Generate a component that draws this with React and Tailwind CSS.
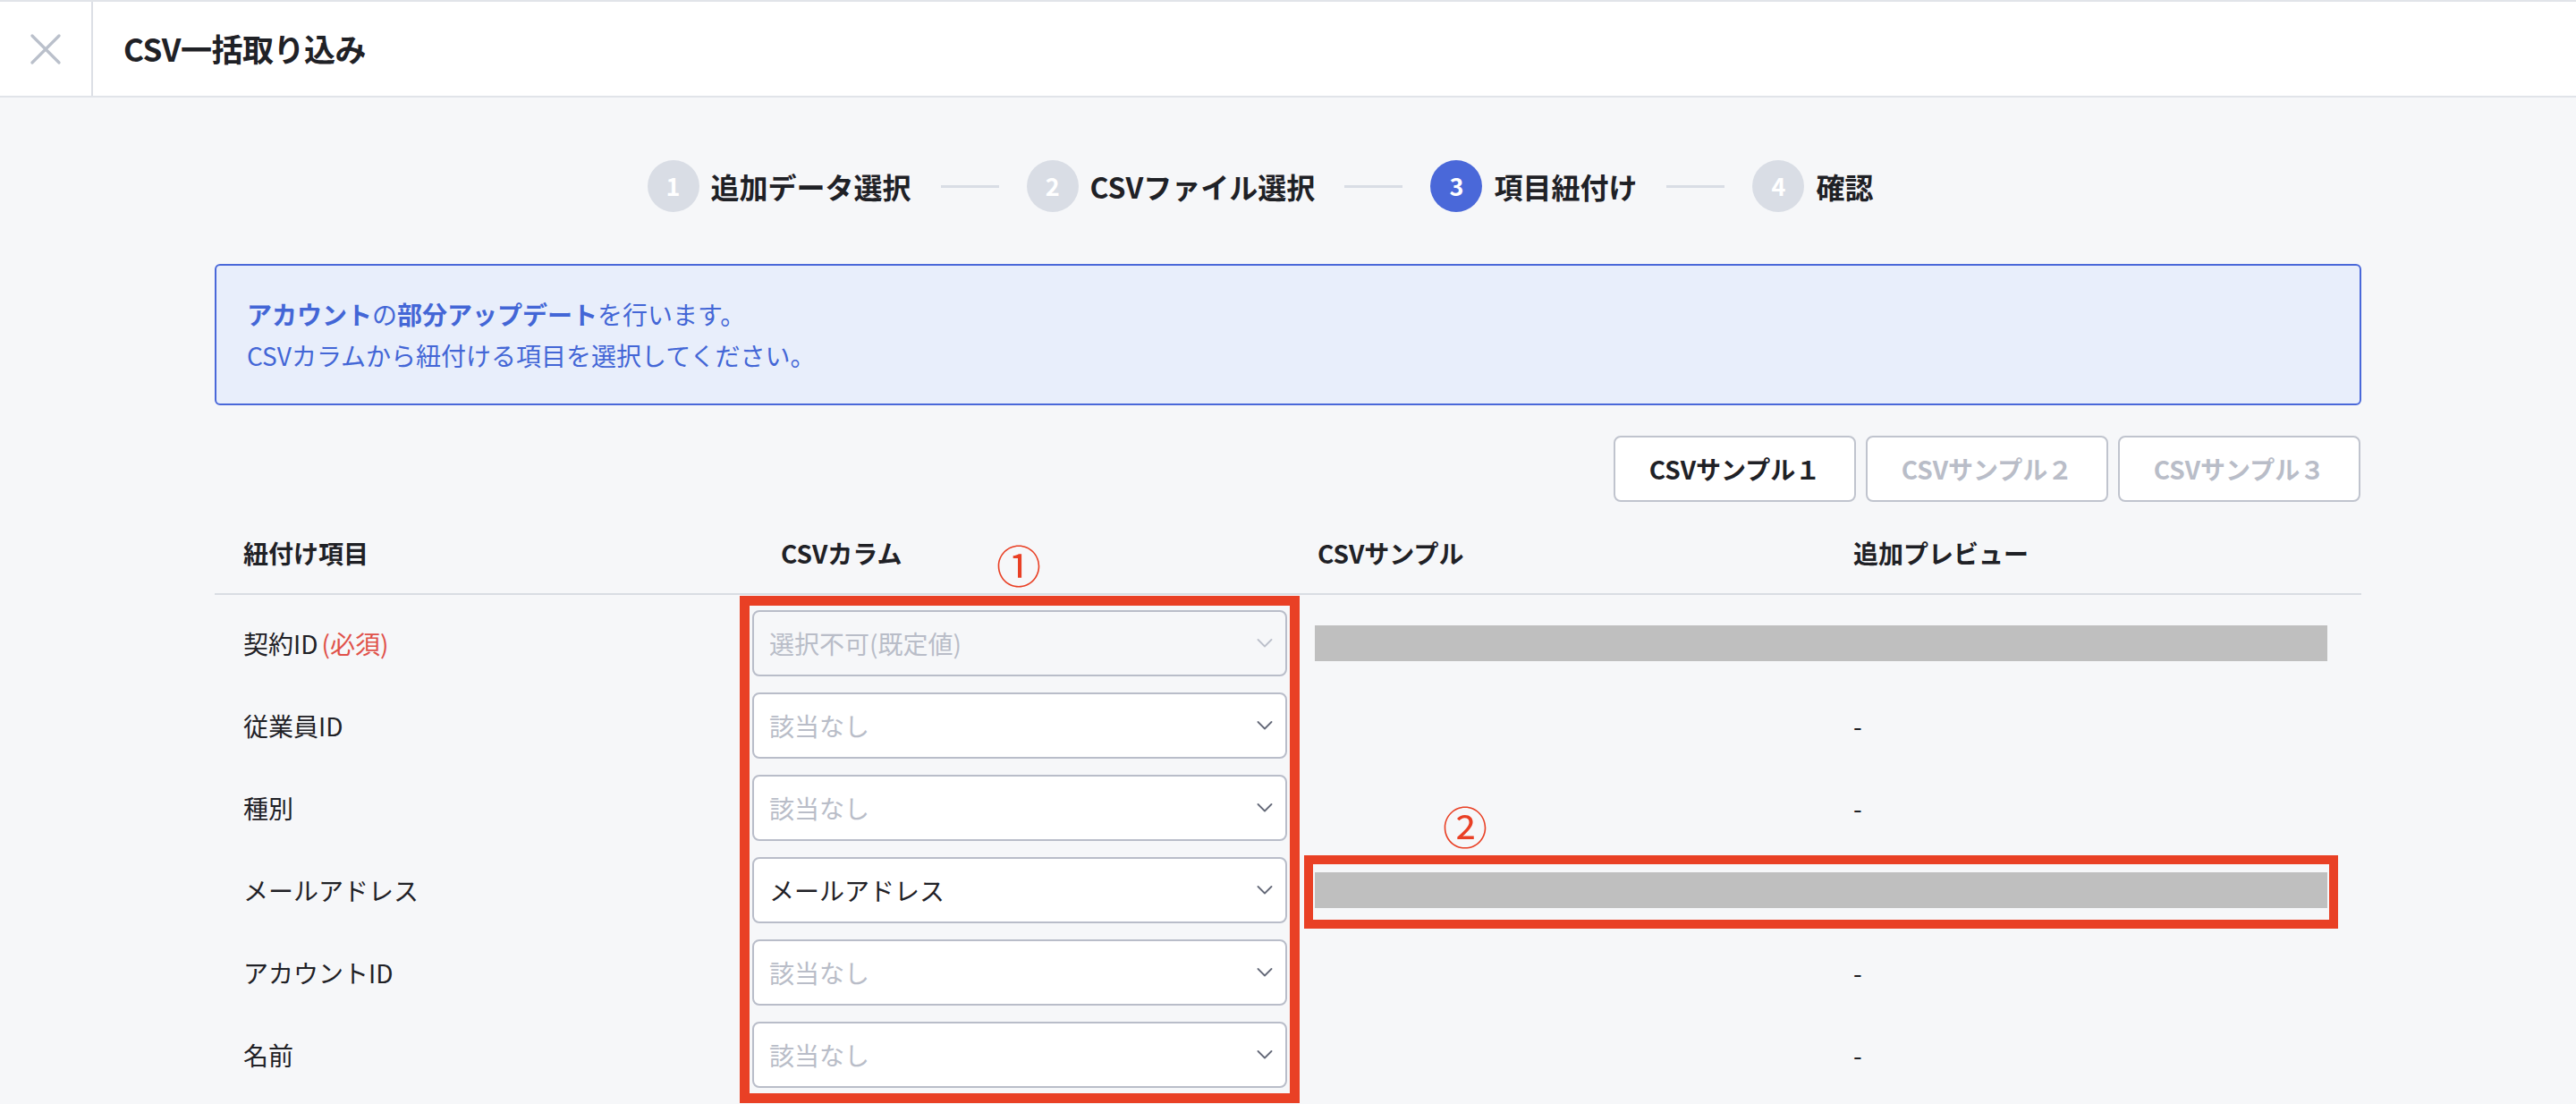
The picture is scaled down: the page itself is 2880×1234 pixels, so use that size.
import React from 'react';

const steps = [
  { n: 1, label: '追加データ選択' },
  { n: 2, label: 'CSVファイル選択' },
  { n: 3, label: '項目紐付け', active: true },
  { n: 4, label: '確認' },
];

const rows = [
  { label: '契約ID', required: true, value: '選択不可(既定値)', disabled: true, bar: true },
  { label: '従業員ID', value: '該当なし', placeholder: true },
  { label: '種別', value: '該当なし', placeholder: true },
  { label: 'メールアドレス', value: 'メールアドレス', bar: true },
  { label: 'アカウントID', value: '該当なし', placeholder: true },
  { label: '名前', value: '該当なし', placeholder: true },
];

function Chevron({ light }) {
  return (
    <svg width="18" height="10" viewBox="0 0 18 10" fill="none">
      <polyline
        points="1.5,1 9,8.5 16.5,1"
        stroke={light ? '#bcc0cb' : '#646978'}
        strokeWidth="1.8"
        strokeLinecap="round"
        strokeLinejoin="round"
      />
    </svg>
  );
}

function Select({ value, disabled, placeholder }) {
  return (
    <div
      className={`h-[74px] mx-[1px] flex items-center justify-between border-2 border-[#b9bdc9] rounded-[8px] pl-[17px] pr-[14px] ${
        disabled ? 'bg-[#f6f7f9]' : 'bg-white'
      }`}
    >
      <span className={`text-[28px] ${disabled || placeholder ? 'text-[#b9bdc8]' : 'text-[#1f2126]'}`}>{value}</span>
      <Chevron light={disabled} />
    </div>
  );
}

export default function App() {
  return (
    <div className="w-full h-[1234px] overflow-hidden bg-[#f6f7f9] font-['Noto_Sans_CJK_JP',sans-serif] text-[#1f2126]">
      {/* Header */}
      <header className="h-[109px] bg-white border-t-2 border-b-2 border-[#e1e4e9] flex">
        <div className="w-[104px] border-r-2 border-[#dcdfe5] flex items-center justify-center">
          <svg width="34" height="34" viewBox="0 0 34 34" fill="none">
            <path d="M2 2L32 32M32 2L2 32" stroke="#bac0cb" strokeWidth="3.2" strokeLinecap="round" />
          </svg>
        </div>
        <h1 className="pl-[34px] flex items-center text-[35px] font-bold tracking-[-0.5px]">CSV一括取り込み</h1>
      </header>

      {/* Stepper */}
      <div className="mt-[70px] pr-[62px] flex items-center justify-center">
        {steps.map((s, i) => (
          <div key={s.n} className="flex items-center">
            <div
              className={`w-[58px] h-[58px] rounded-full flex items-center justify-center text-white text-[27px] font-bold ${
                s.active ? 'bg-[#4a68d9]' : 'bg-[#d9dde5]'
              }`}
            >
              {s.n}
            </div>
            <span className="ml-[13px] text-[32px] font-bold">{s.label}</span>
            {i < steps.length - 1 && <div className="ml-[33px] mr-[31px] w-[65px] h-[3px] bg-[#d9dde5]" />}
          </div>
        ))}
      </div>

      <div className="mx-[240px] mt-[58px]">
        {/* Info */}
        <div className="h-[158px] border-2 border-[#4a68d9] rounded-[6px] bg-[#e8eefb] px-[34px] py-[31px] text-[28px] leading-[46px] text-[#4366d6]">
          <p>
            <span className="font-bold">アカウント</span>の<span className="font-bold">部分アップデート</span>を行います。
          </p>
          <p>CSVカラムから紐付ける項目を選択してください。</p>
        </div>

        {/* Sample switch */}
        <div className="mt-[34px] flex justify-end gap-[11px] pr-[1px]">
          {['CSVサンプル１', 'CSVサンプル２', 'CSVサンプル３'].map((t, i) => (
            <button
              key={t}
              className={`w-[271px] h-[74px] bg-white border-2 border-[#c0c4ce] rounded-[8px] text-[28px] font-bold ${
                i === 0 ? 'text-[#1f2126]' : 'text-[#b9bdc8]'
              }`}
            >
              {t}
            </button>
          ))}
        </div>

        {/* Table */}
        <div className="mt-[12px]">
          <div className="h-[92px] grid grid-cols-4 items-center border-b-2 border-[#d9dde3] text-[28px] font-bold">
            <div className="pl-8">紐付け項目</div>
            <div className="pl-[33px]">CSVカラム</div>
            <div className="pl-[33px]">CSVサンプル</div>
            <div className="pl-8">追加プレビュー</div>
          </div>

          <div className="relative pt-[17px] flex flex-col gap-[18px]">
            {rows.map((r) => (
              <div key={r.label} className="h-[74px] grid grid-cols-4 items-center text-[28px]">
                <div className="pl-8">
                  {r.label}
                  {r.required && <span className="ml-[4px] text-[#e0514a]">(必須)</span>}
                </div>
                <Select value={r.value} disabled={r.disabled} placeholder={r.placeholder} />
                {r.bar ? (
                  <div className="col-span-2 pl-[30px] pr-[38px]">
                    <div className="h-[40px] bg-[#bfbfbf]" />
                  </div>
                ) : (
                  <>
                    <div />
                    <div className="pl-8">-</div>
                  </>
                )}
              </div>
            ))}

            {/* annotations */}
            <div className="absolute left-[587px] top-[1px] w-[626px] h-[567px] border-[11px] border-[#e94025]" />
            <span className="absolute left-[874px] top-[-60px] text-[50px] leading-none text-[#e94025]">①</span>
            <div className="absolute left-[1218px] top-[291px] w-[1156px] h-[82px] border-[10px] border-[#e94025]" />
            <span className="absolute left-[1373px] top-[232px] text-[50px] leading-none text-[#e94025]">②</span>
          </div>
        </div>
      </div>
    </div>
  );
}
